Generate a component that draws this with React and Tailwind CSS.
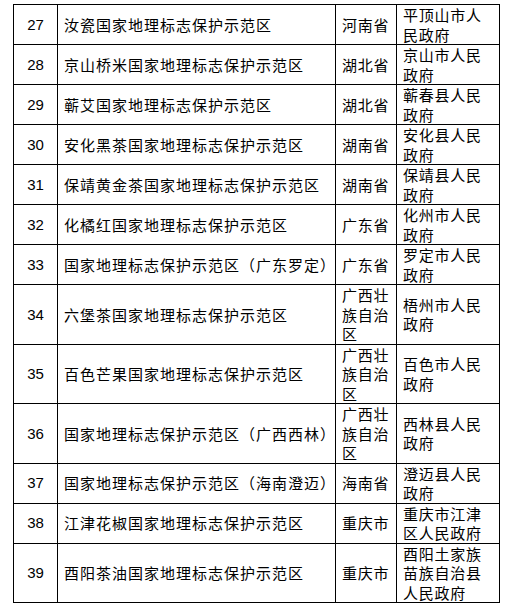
const rows = [
  ['27', '汝瓷国家地理标志保护示范区', ['河南省'], ['平顶山市人', '民政府']],
  ['28', '京山桥米国家地理标志保护示范区', ['湖北省'], ['京山市人民', '政府']],
  ['29', '蕲艾国家地理标志保护示范区', ['湖北省'], ['蕲春县人民', '政府']],
  ['30', '安化黑茶国家地理标志保护示范区', ['湖南省'], ['安化县人民', '政府']],
  ['31', '保靖黄金茶国家地理标志保护示范区', ['湖南省'], ['保靖县人民', '政府']],
  ['32', '化橘红国家地理标志保护示范区', ['广东省'], ['化州市人民', '政府']],
  ['33', '国家地理标志保护示范区（广东罗定）', ['广东省'], ['罗定市人民', '政府']],
  ['34', '六堡茶国家地理标志保护示范区', ['广西壮', '族自治', '区'], ['梧州市人民', '政府']],
  ['35', '百色芒果国家地理标志保护示范区', ['广西壮', '族自治', '区'], ['百色市人民', '政府']],
  ['36', '国家地理标志保护示范区（广西西林）', ['广西壮', '族自治', '区'], ['西林县人民', '政府']],
  ['37', '国家地理标志保护示范区（海南澄迈）', ['海南省'], ['澄迈县人民', '政府']],
  ['38', '江津花椒国家地理标志保护示范区', ['重庆市'], ['重庆市江津', '区人民政府']],
  ['39', '酉阳茶油国家地理标志保护示范区', ['重庆市'], ['酉阳土家族', '苗族自治县', '人民政府']],
]

const cjk = "font-['Noto_Sans_CJK_SC',sans-serif]"

function Lines({ lines }) {
  return lines.map((l, i) => (
    <div key={i} className="whitespace-nowrap">{l}</div>
  ))
}

export default function App() {
  return (
    <div className="w-[514px] h-[608px] bg-white pt-[4px] pl-[13px] text-black">
      <table className="table-fixed border-collapse w-[487px] text-[15px] leading-[19.5px]">
        <colgroup>
          <col className="w-[44px]" />
          <col className="w-[278px]" />
          <col className="w-[61px]" />
          <col className="w-[103px]" />
        </colgroup>
        <tbody>
          {rows.map(([num, name, prov, gov]) => (
            <tr key={num}>
              <td className="border border-black p-0 text-center align-middle font-['Liberation_Sans',Arial,sans-serif]">
                {num}
              </td>
              <td className={`border border-black p-0 pl-[6px] align-middle tracking-[1px] whitespace-nowrap ${cjk}`}>
                {name}
              </td>
              <td className={`border border-black p-0 pl-[6px] align-middle tracking-[0.75px] ${cjk}`}>
                <Lines lines={prov} />
              </td>
              <td className={`border border-black p-0 pl-[6px] align-middle tracking-[0.75px] ${cjk}`}>
                <Lines lines={gov} />
              </td>
            </tr>
          ))}
        </tbody>
      </table>
    </div>
  )
}
